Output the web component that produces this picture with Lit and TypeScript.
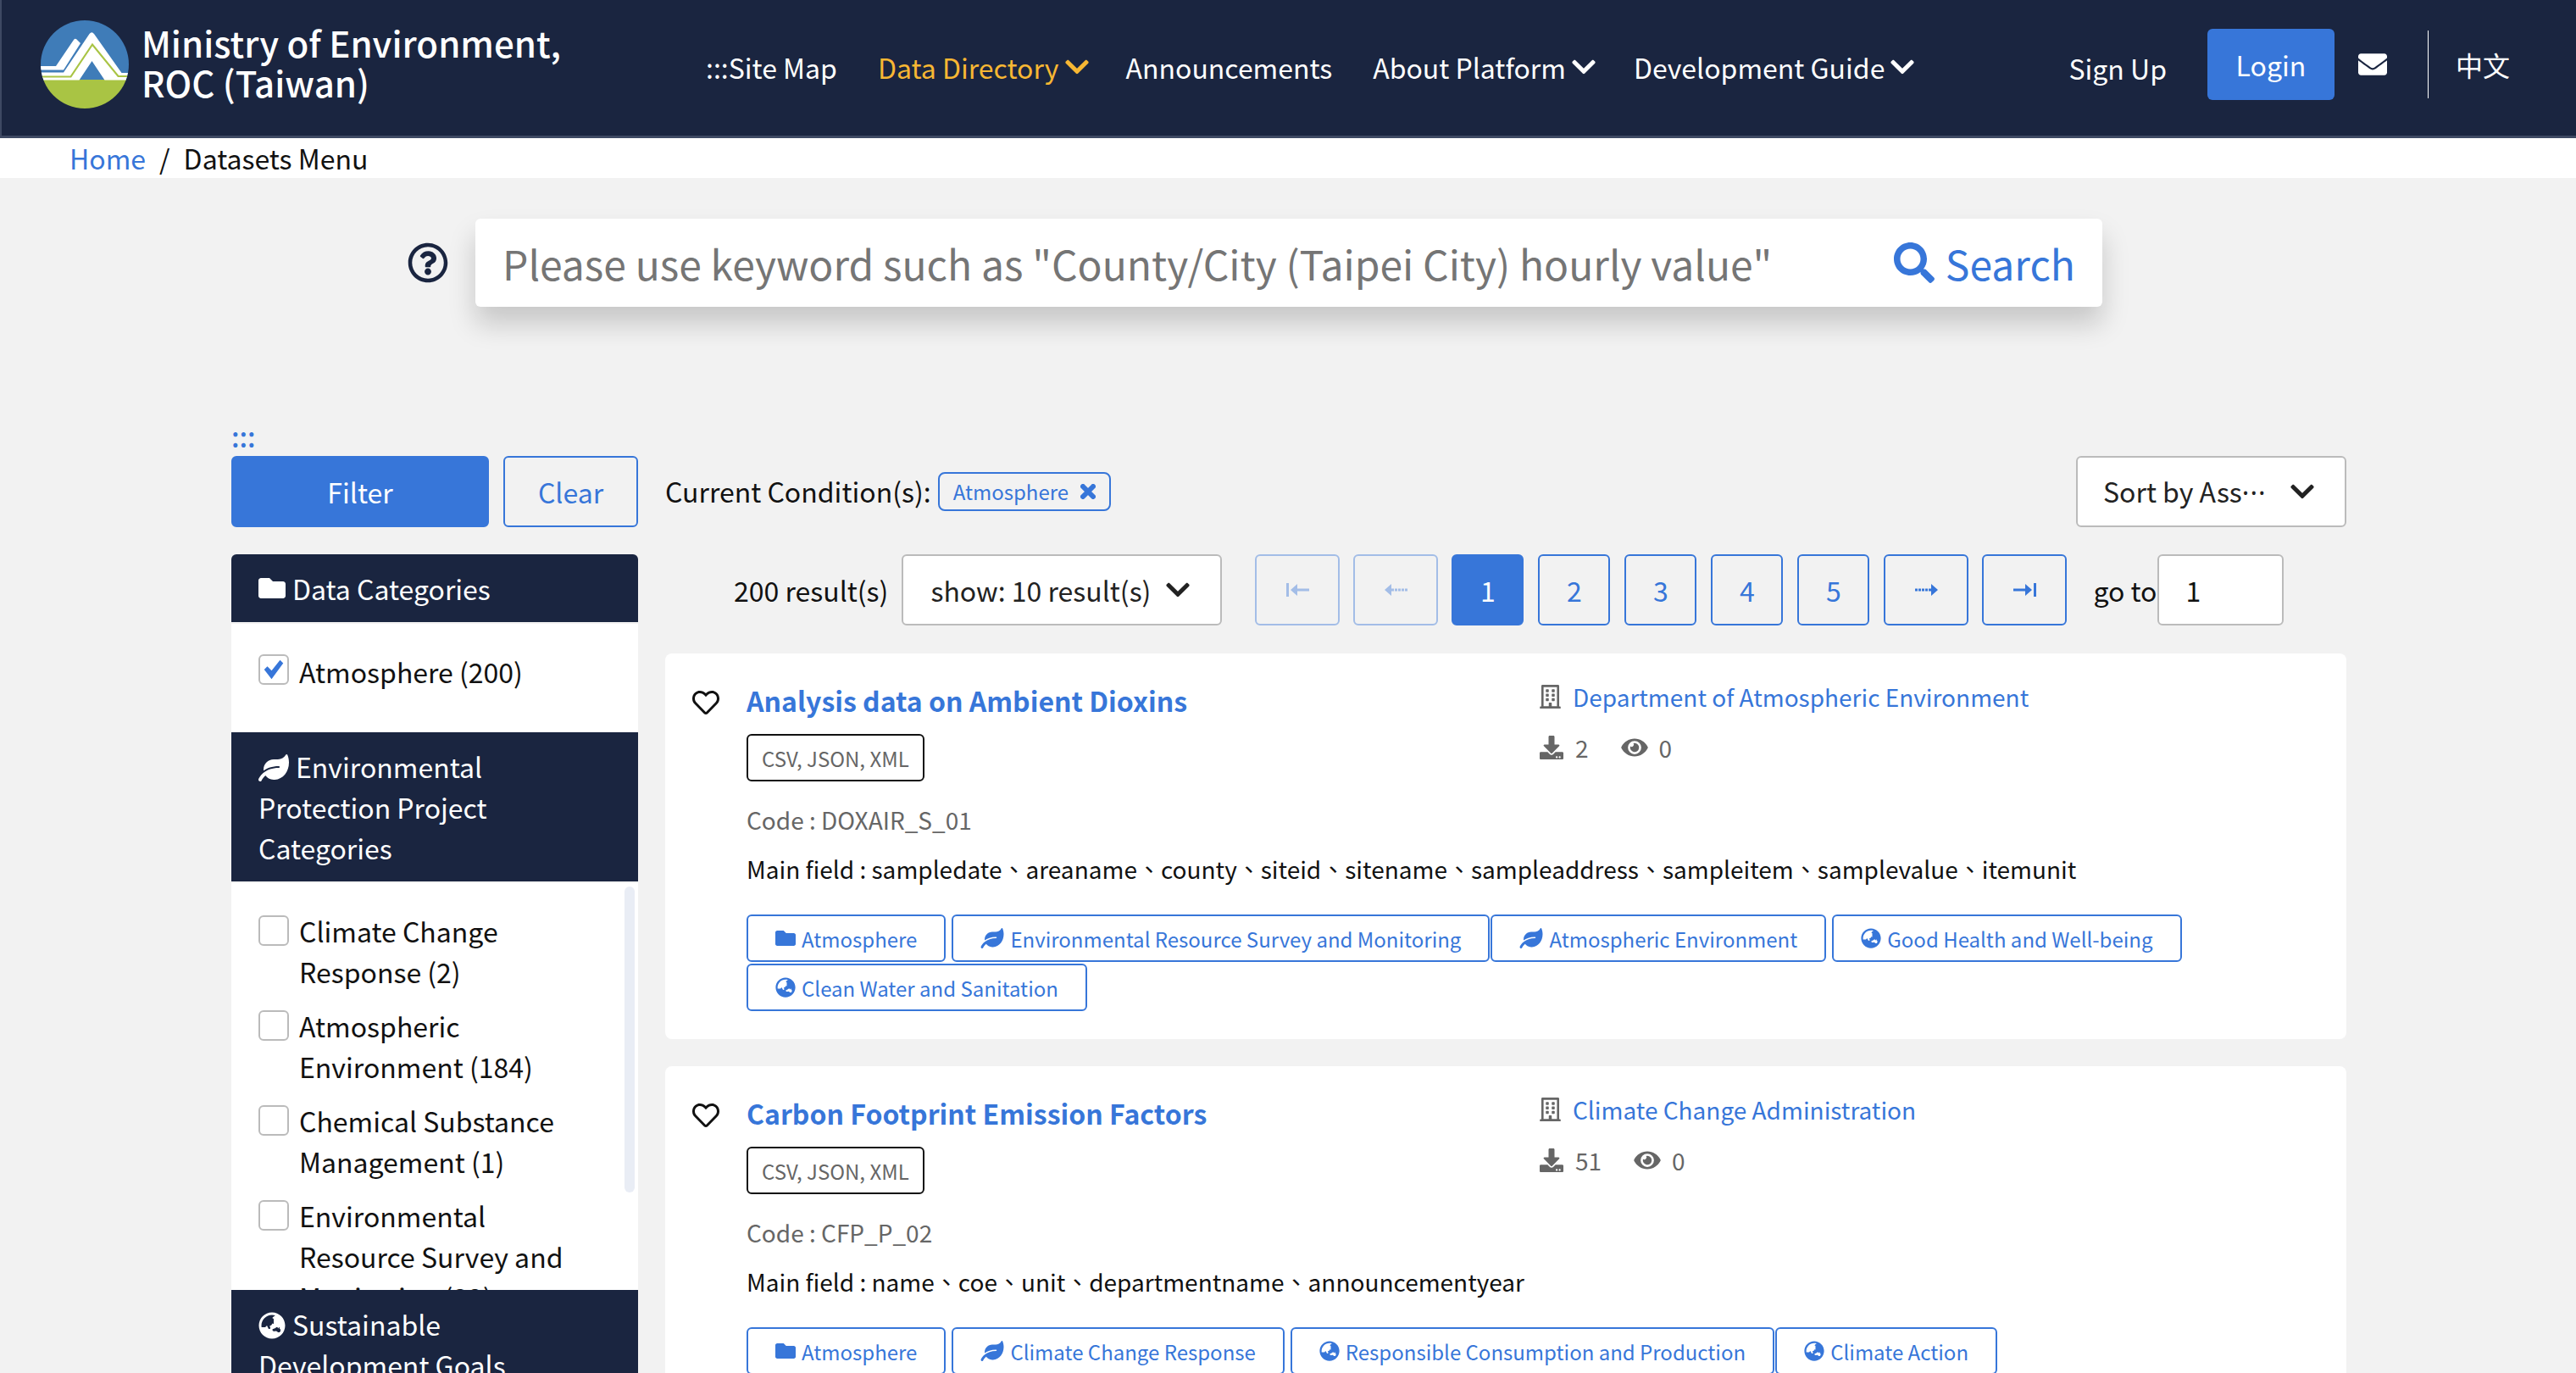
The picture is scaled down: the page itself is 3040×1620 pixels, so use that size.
import { LitElement, html, css, svg } from 'lit';
import { customElement } from 'lit/decorators.js';

const folder = html`<svg class="ic" viewBox="0 0 512 512"><path d="M464 128H272l-64-64H48C21.49 64 0 85.49 0 112v288c0 26.51 21.49 48 48 48h416c26.51 0 48-21.49 48-48V176c0-26.51-21.49-48-48-48z"/></svg>`;
const leaf = html`<svg class="ic leaf" viewBox="0 0 576 512"><path d="M546.2 9.7c-5.6-12.5-21.6-13-28.3-1.2C486.9 62.4 431.4 96 368 96h-80C182 96 96 182 96 288c0 7 .8 13.7 1.5 20.5C161.3 262.8 253.4 224 384 224c8.8 0 16 7.2 16 16s-7.2 16-16 16C132.6 256 26 410.1 2.4 468c-6.6 16.3 1.2 34.9 17.5 41.6 16.4 6.8 35-1.1 41.8-17.3 1.5-3.6 20.9-47.9 71.9-90.6 32.4 43.9 94 85.8 174.9 77.2C465.5 467.5 576 326.7 576 154.3c0-50.2-10.8-102.2-29.8-144.6z"/></svg>`;
const globe = html`<svg class="ic" viewBox="0 0 496 512"><path d="M248 8C111.03 8 0 119.03 0 256s111.03 248 248 248 248-111.03 248-248S384.97 8 248 8zm-11.34 240.23c-2.89 4.82-8.1 7.77-13.72 7.77h-.31c-4.24 0-8.31 1.69-11.31 4.69l-5.66 5.66c-3.12 3.12-3.12 8.19 0 11.31l5.66 5.66c3 3 4.69 7.07 4.69 11.31V304c0 8.84-7.16 16-16 16h-6.11c-6.06 0-11.6-3.42-14.31-8.85l-22.62-45.23c-2.44-4.88-8.95-5.94-12.81-2.08l-19.47 19.46c-3 3-7.07 4.69-11.31 4.69H50.81C49.12 277.55 48 266.92 48 256c0-110.28 89.72-200 200-200 21.51 0 42.2 3.51 61.63 9.82l-50.16 38.53c-5.11 3.41-4.63 11.06.86 13.81l10.83 5.41c5.42 2.71 8.84 8.25 8.84 14.31V216c0 4.42-3.58 8-8 8h-3.06c-3.03 0-5.8-1.71-7.15-4.42-1.56-3.12-5.96-3.29-7.76-.3l-17.37 28.95zM408 358.43c0 4.24-1.69 8.31-4.69 11.31l-9.57 9.57c-3 3-7.07 4.69-11.31 4.69h-15.16c-4.24 0-8.31-1.69-11.31-4.69l-13.01-13.01a26.767 26.767 0 0 0-25.42-7.04l-21.27 5.32c-1.27.32-2.57.48-3.88.48h-10.34c-4.24 0-8.31-1.69-11.31-4.69l-11.91-11.91a8.008 8.008 0 0 1-2.34-5.66v-10.2c0-3.27 1.99-6.21 5.03-7.43l39.34-15.74c1.98-.79 3.86-1.82 5.59-3.05l23.71-16.89a7.978 7.978 0 0 1 4.64-1.48h12.09c3.23 0 6.15 1.94 7.39 4.93l5.35 12.85a4 4 0 0 0 3.69 2.46h3.8c1.78 0 3.35-1.18 3.84-2.88l4.2-14.47c.5-1.71 2.06-2.88 3.84-2.88h6.06c2.21 0 4 1.79 4 4v12.93c0 2.12.84 4.16 2.34 5.66l11.91 11.91c3 3 4.69 7.07 4.69 11.31v24.6z"/></svg>`;
const chevron = html`<svg class="chev" viewBox="0 0 448 512"><path d="M207.029 381.476L12.686 187.132c-9.373-9.373-9.373-24.569 0-33.941l22.667-22.667c9.357-9.357 24.522-9.375 33.901-.04L224 284.505l154.745-154.021c9.379-9.335 24.544-9.317 33.901.04l22.667 22.667c9.373 9.373 9.373 24.569 0 33.941L240.971 381.476c-9.373 9.372-24.569 9.372-33.942 0z"/></svg>`;
const heart = html`<svg class="heart" viewBox="0 0 512 512"><path d="M458.4 64.3C400.6 15.7 311.3 23 256 79.3 200.7 23 111.4 15.6 53.6 64.3-21.6 127.6-10.6 230.8 43 285.5l175.4 178.7c10 10.2 23.4 15.9 37.6 15.9 14.3 0 27.6-5.6 37.6-15.8L469 285.6c53.5-54.7 64.7-157.9-10.6-221.3zm-23.6 187.5L259.4 430.5c-2.4 2.4-4.4 2.4-6.8 0L77.2 251.8c-36.5-37.2-43.9-107.6 7.3-150.7 38.9-32.7 98.9-27.8 136.5 10.5l35 35.7 35-35.7c37.8-38.5 97.8-43.2 136.5-10.6 51.1 43.1 43.5 113.9 7.3 150.8z"/></svg>`;
const building = html`<svg class="bld" viewBox="0 0 448 512"><path d="M128 148v-40c0-6.6 5.4-12 12-12h40c6.6 0 12 5.4 12 12v40c0 6.6-5.4 12-12 12h-40c-6.6 0-12-5.4-12-12zm140 12h40c6.6 0 12-5.4 12-12v-40c0-6.6-5.4-12-12-12h-40c-6.6 0-12 5.4-12 12v40c0 6.6 5.4 12 12 12zm-128 96h40c6.6 0 12-5.4 12-12v-40c0-6.6-5.4-12-12-12h-40c-6.6 0-12 5.4-12 12v40c0 6.6 5.4 12 12 12zm128 0h40c6.6 0 12-5.4 12-12v-40c0-6.6-5.4-12-12-12h-40c-6.6 0-12 5.4-12 12v40c0 6.6 5.4 12 12 12zm-76 84v-40c0-6.6-5.4-12-12-12h-40c-6.6 0-12 5.4-12 12v40c0 6.6 5.4 12 12 12h40c6.6 0 12-5.4 12-12zm76 12h40c6.6 0 12-5.4 12-12v-40c0-6.6-5.4-12-12-12h-40c-6.6 0-12 5.4-12 12v40c0 6.6 5.4 12 12 12zm180 124v36H0v-36c0-6.6 5.4-12 12-12h19.5V24c0-13.3 10.7-24 24-24h337c13.3 0 24 10.7 24 24v440H436c6.6 0 12 5.4 12 12zM79.5 463H192v-67c0-6.6 5.4-12 12-12h40c6.6 0 12 5.4 12 12v67h112.500V49L80 48l-.5 415z"/></svg>`;
const download = html`<svg class="dl" viewBox="0 0 512 512"><path d="M216 0h80c13.3 0 24 10.7 24 24v168h87.7c17.8 0 26.7 21.5 14.1 34.1L269.7 378.3c-7.5 7.5-19.8 7.5-27.3 0L90.1 226.1c-12.6-12.6-3.7-34.1 14.1-34.1H192V24c0-13.3 10.7-24 24-24zm296 376v112c0 13.3-10.7 24-24 24H24c-13.3 0-24-10.7-24-24V376c0-13.3 10.7-24 24-24h146.7l49 49c20.1 20.1 52.5 20.1 72.6 0l49-49H488c13.3 0 24 10.7 24 24zm-124 88c0-11-9-20-20-20s-20 9-20 20 9 20 20 20 20-9 20-20zm64 0c0-11-9-20-20-20s-20 9-20 20 9 20 20 20 20-9 20-20z"/></svg>`;
const eye = html`<svg class="eye" viewBox="0 0 576 512"><path d="M572.52 241.4C518.29 135.59 410.93 64 288 64S57.68 135.64 3.48 241.41a32.35 32.35 0 0 0 0 29.19C57.71 376.41 165.07 448 288 448s230.32-71.64 284.52-177.41a32.35 32.35 0 0 0 0-29.19zM288 400a144 144 0 1 1 144-144 143.93 143.93 0 0 1-144 144zm0-240a95.31 95.31 0 0 0-25.31 3.79 47.85 47.85 0 0 1-66.9 66.9A95.78 95.78 0 1 0 288 160z"/></svg>`;

const logo = html`<svg class="logo" viewBox="0 0 104 104">
  <defs><clipPath id="lc"><ellipse cx="52" cy="52" rx="52" ry="52"/></clipPath></defs>
  <g clip-path="url(#lc)">
    <rect width="104" height="71" fill="#3f7cb8"/>
    <rect y="70" width="104" height="34" fill="#a9c444"/>
    ${svg`<path d="M0 54h18L39 23q1.500-2 3.500-.5L47 27 27 58.500H0z" fill="#fff"/>
    <path d="M0 61.500h27L57.500 16q2.800-3.500 5.500 0L95.500 62H104v8.500H75.500L60.500 48 45.500 70.500H0z" fill="#fff"/>
    <path d="M0 66.500h35.500L61 28.500 91.500 66H104" fill="none" stroke="#a9c444" stroke-width="2.200"/>`}
  </g></svg>`;

interface Card {
  title: string;
  dept: string;
  dl: string;
  code: string;
  fields: string;
  tags: { icon: unknown; text: string; tight?: boolean }[];
}

const CARDS: Card[] = [
  {
    title: 'Analysis data on Ambient Dioxins',
    dept: 'Department of Atmospheric Environment',
    dl: '2',
    code: 'DOXAIR_S_01',
    fields: 'sampledate、areaname、county、siteid、sitename、sampleaddress、sampleitem、samplevalue、itemunit',
    tags: [
      { icon: folder, text: 'Atmosphere' },
      { icon: leaf, text: 'Environmental Resource Survey and Monitoring', tight: true },
      { icon: leaf, text: 'Atmospheric Environment' },
      { icon: globe, text: 'Good Health and Well-being' },
      { icon: globe, text: 'Clean Water and Sanitation' },
    ],
  },
  {
    title: 'Carbon Footprint Emission Factors',
    dept: 'Climate Change Administration',
    dl: '51',
    code: 'CFP_P_02',
    fields: 'name、coe、unit、departmentname、announcementyear',
    tags: [
      { icon: folder, text: 'Atmosphere' },
      { icon: leaf, text: 'Climate Change Response' },
      { icon: globe, text: 'Responsible Consumption and Production', tight: true },
      { icon: globe, text: 'Climate Action' },
    ],
  },
];

const FILTERS = [
  'Climate Change Response (2)',
  'Atmospheric Environment (184)',
  'Chemical Substance Management (1)',
  'Environmental Resource Survey and Monitoring (32)',
];

@customElement('app-root')
export class AppRoot extends LitElement {
  static styles = css`
    :host {
      display: block;
      height: 1620px;
      overflow: hidden;
      background: #f2f2f2;
      font-family: "Noto Sans CJK TC", "Noto Sans", sans-serif;
      font-size: 32px;
      color: #111;
    }
    svg { fill: currentColor; display: block; flex: none; }
    header {
      height: 160px;
      background: #1a2540;
      border-bottom: 3px solid #3e4963;
      border-left: 2px solid #3e4963;
      display: flex;
      align-items: center;
      color: #fff;
      padding-right: 78px;
    }
    .logo { width: 104px; height: 104px; margin: -8px 0 0 46px; }
    .brand { margin: -14px 0 0 15px; font-size: 42px; line-height: 47px; font-weight: 500; width: 666px; }
    nav { display: flex; align-items: center; gap: 46px; margin-top: -2px; }
    nav a { display: flex; align-items: center; gap: 5px; }
    nav .on { color: #f7b733; margin: 0 -4px 0 2px; }
    nav .ann { margin-right: 2px; }
    nav .about { margin-right: -3px; }
    .chev { width: 32px; height: 32px; }
    .right { margin-left: auto; display: flex; align-items: center; }
    .shift { margin-bottom: 8px; }
    .login {
      width: 150px; height: 84px; margin-left: 48px; background: #3776d9; border-radius: 6px;
      display: flex; align-items: center; justify-content: center;
    }
    .mail { width: 34px; height: 34px; margin-left: 28px; }
    .sep { width: 1px; height: 80px; background: #fff; margin-left: 48px; margin-right: 32px; }
    .crumb {
      height: 47px; background: #fff; display: flex; align-items: center; padding-left: 82px;
      gap: 16px; line-height: 47px;
    }
    .blue { color: #3776d9; }
    .search-row { display: flex; align-items: center; margin-top: 48px; padding-left: 481px; }
    .help { width: 48px; height: 48px; color: #1a2540; margin-right: 32px; }
    .search {
      width: 1920px; height: 104px; background: #fff; border-radius: 6px; box-sizing: border-box;
      display: flex; align-items: center; justify-content: space-between; padding: 0 32px;
      box-shadow: 0 20px 32px rgba(0, 0, 0, 0.18); font-size: 48px; color: #757575;
    }
    .search .go { display: flex; align-items: center; gap: 13px; color: #3776d9; }
    .search .go svg { width: 48px; height: 48px; }
    .dots { margin: 140px 0 0 273px; height: 36px; color: #3776d9; line-height: 24px; font-weight: 500; }
    .main { display: grid; grid-template-columns: 480px 1984px; gap: 32px; padding-left: 273px; }
    .btns { display: flex; gap: 17px; height: 84px; margin-bottom: 32px; }
    .btn {
      box-sizing: border-box; height: 84px; border-radius: 6px; display: flex; align-items: center;
      justify-content: center; border: 2px solid #3776d9; color: #3776d9; flex: none;
    }
    .btn.fill { background: #3776d9; color: #fff; }
    .btns .fill { width: 304px; }
    .btns .btn:not(.fill) { width: 159px; }
    .head { background: #1a2540; color: #fff; padding: 0 32px; line-height: 48px; }
    .head svg { display: inline-block; width: 32px; height: 32px; vertical-align: -4px; margin-right: 8px; }
    .head svg.leaf { width: 36px; }
    .head.first { height: 80px; border-radius: 6px 6px 0 0; display: flex; align-items: center; }
    .head.env { padding-top: 16px; padding-bottom: 16px; }
    .head.sdg { padding-top: 16px; }
    .box { background: #fff; margin-top: 2px; }
    .item { display: flex; gap: 12px; line-height: 48px; margin-bottom: 16px; padding-left: 32px; }
    .cb {
      box-sizing: border-box; width: 36px; height: 36px; margin-top: 4px; border: 2px solid #bbb;
      border-radius: 6px; background: #fff; flex: none; color: #3776d9;
    }
    .cb svg { width: 30px; height: 30px; margin: 1px; }
    .box.one { height: 128px; padding-top: 32px; box-sizing: border-box; }
    .box.list { height: 480px; overflow: hidden; position: relative; padding-top: 32px; box-sizing: border-box; }
    .box.list .item { padding-right: 40px; }
    .box.list .cb { margin-top: 6px; }
    .thumb { position: absolute; left: 464px; top: 4px; width: 12px; height: 361px; border-radius: 6px; background: #e9edf5; }
    .cond { display: flex; align-items: center; height: 84px; margin-bottom: 32px; line-height: 48px; }
    .lbl { margin-bottom: 3px; }
    .chip {
      display: flex; align-items: center; gap: 14px; height: 46px; box-sizing: border-box; margin-left: 8px;
      border: 2px solid #3776d9; border-radius: 8px; color: #3776d9; padding: 0 16px; font-size: 24px;
    }
    .chip svg { width: 18px; height: 18px; stroke: currentColor; stroke-width: 6; stroke-linecap: round; }
    .sort {
      box-sizing: border-box; margin-left: auto; width: 319px; height: 84px; background: #fff;
      border: 2px solid #bbb; border-radius: 6px; display: flex; align-items: center; justify-content: space-between;
      padding: 0 34px 0 30px; color: #222; white-space: nowrap;
    }
    .ell { font-family: "Noto Sans", sans-serif; letter-spacing: 1px; }
    .pager { display: flex; align-items: center; height: 84px; margin-bottom: 33px; padding-left: 81px; }
    .select {
      box-sizing: border-box; width: 378px; height: 84px; background: #fff; border: 2px solid #bbb; border-radius: 6px;
      display: flex; align-items: center; justify-content: space-between; padding: 0 34px 0 32px; margin: 0 39px 0 16px; color: #222;
    }
    .pg { width: 85px; margin-right: 17px; }
    .pg.arrow { width: 100px; margin-right: 16px; }
    .pg.off { opacity: 0.42; }
    .pg svg { width: 27px; height: 16px; }
    .goto { margin-left: 15px; }
    .input {
      box-sizing: border-box; width: 149px; height: 84px; background: #fff; border: 2px solid #bbb; border-radius: 6px;
      display: flex; align-items: center; padding-left: 32px;
    }
    .card {
      background: #fff; border-radius: 8px; height: 455px; margin-bottom: 32px; display: flex;
      padding: 31px 0 0 32px; box-sizing: border-box;
    }
    .heart { width: 32px; height: 32px; margin-top: 11px; color: #111; }
    .body { margin-left: 32px; width: 1780px; position: relative; }
    .title { color: #3776d9; font-weight: 700; line-height: 48px; }
    .fmt {
      box-sizing: border-box; display: flex; align-items: center; width: fit-content; height: 56px; margin-top: 16px; padding: 0 16px;
      border: 2px solid #111; border-radius: 6px; color: #666; font-size: 24px;
    }
    .code { color: #666; font-size: 28px; margin-top: 21px; line-height: 48px; }
    .fields { font-size: 28px; margin-top: 10px; line-height: 48px; }
    .tags { display: flex; flex-wrap: wrap; width: 1780px; margin-top: 30px; row-gap: 2px; }
    .tag {
      box-sizing: border-box; height: 56px; display: flex; align-items: center; gap: 7px; border: 2px solid #3776d9;
      border-radius: 6px; color: #3776d9; font-size: 24px; padding: 0 32px; margin-right: 7px;
    }
    .tag.tight { margin-right: 1px; }
    .tag .ic { width: 24px; height: 24px; }
    .tag .ic.leaf { width: 28px; }
    .meta { position: absolute; left: 936px; top: -7px; }
    .dept { display: flex; align-items: center; gap: 14px; color: #3776d9; font-size: 28px; line-height: 54px; }
    .bld { width: 25px; height: 28px; color: #666; }
    .stats { display: flex; align-items: center; color: #666; font-size: 28px; margin-top: 9px; line-height: 48px; }
    .dl { width: 28px; height: 28px; margin-right: 14px; }
    .eye { width: 32px; height: 28px; margin: 0 13px 0 38px; }
  `;

  private card(c: Card) {
    return html`<div class="card">
      ${heart}
      <div class="body">
        <div class="title">${c.title}</div>
        <div class="fmt">CSV, JSON, XML</div>
        <div class="code">Code : ${c.code}</div>
        <div class="fields">Main field : ${c.fields}</div>
        <div class="tags">
          ${c.tags.map((t) => html`<span class="tag ${t.tight ? 'tight' : ''}">${t.icon}${t.text}</span>`)}
        </div>
        <div class="meta">
          <div class="dept">${building}${c.dept}</div>
          <div class="stats">${download}${c.dl}${eye}0</div>
        </div>
      </div>
    </div>`;
  }

  render() {
    return html`
      <header>
        ${logo}
        <div class="brand">Ministry of Environment,<br />ROC (Taiwan)</div>
        <nav>
          <a>:::Site Map</a>
          <a class="on">Data Directory${chevron}</a>
          <a class="ann">Announcements</a>
          <a class="about">About Platform${chevron}</a>
          <a>Development Guide${chevron}</a>
        </nav>
        <div class="right">
          <a>Sign Up</a>
          <a class="login shift">Login</a>
          <svg class="mail shift" viewBox="0 0 512 512"><path d="M502.3 190.8c3.9-3.1 9.7-.2 9.7 4.7V400c0 26.5-21.5 48-48 48H48c-26.5 0-48-21.5-48-48V195.6c0-5 5.7-7.8 9.7-4.7 22.4 17.4 52.1 39.5 154.1 113.6 21.1 15.4 56.7 47.8 92.2 47.6 35.7.3 72-32.8 92.3-47.6 102-74.1 131.6-96.3 154-113.7zM256 320c23.2.4 56.6-29.2 73.4-41.4 132.7-96.3 142.8-104.7 173.4-128.7 5.8-4.5 9.2-11.5 9.2-18.9v-19c0-26.5-21.5-48-48-48H48C21.5 64 0 85.5 0 112v19c0 7.4 3.4 14.3 9.2 18.9 30.6 23.9 40.7 32.4 173.4 128.7 16.8 12.2 50.2 41.8 73.4 41.4z"/></svg>
          <div class="sep shift"></div>
          <a class="shift">中文</a>
        </div>
      </header>
      <div class="crumb"><span class="blue">Home</span><span>/</span><span>Datasets Menu</span></div>
      <div class="search-row">
        <svg class="help" viewBox="0 0 512 512"><path d="M256 8C119 8 8 119 8 256s111 248 248 248 248-111 248-248S393 8 256 8zm0 448c-110.500 0-200-89.500-200-200S145.500 56 256 56s200 89.500 200 200-89.500 200-200 200zm107-255c0 67-72 68-72 93v6c0 7-5 12-12 12h-46c-7 0-12-5-12-12v-9c0-36 27-50 48-62 18-10 29-17 29-30 0-18-23-29-41-29-24 0-35 11-50 31-4 5-11 6-16 2l-28-21c-5-4-6-11-3-16 24-36 55-56 103-56 50 0 100 39 100 91zm-65 167c0 23-19 42-42 42s-42-19-42-42 19-42 42-42 42 19 42 42z"/></svg>
        <div class="search">
          <span>Please use keyword such as "County/City (Taipei City) hourly value"</span>
          <span class="go"><svg viewBox="0 0 512 512"><path d="M505 442.7L405.3 343c-4.500-4.500-10.600-7-17-7H372c27.600-35.300 44-79.700 44-128C416 93.100 322.900 0 208 0S0 93.100 0 208s93.100 208 208 208c48.300 0 92.700-16.400 128-44v16.300c0 6.400 2.500 12.500 7 17l99.700 99.700c9.400 9.400 24.600 9.400 33.900 0l28.300-28.300c9.400-9.400 9.400-24.600.1-34zM208 336c-70.700 0-128-57.200-128-128 0-70.700 57.200-128 128-128 70.700 0 128 57.200 128 128 0 70.700-57.200 128-128 128z"/></svg>Search</span>
        </div>
      </div>
      <div class="dots">:::</div>
      <div class="main">
        <aside>
          <div class="btns"><div class="btn fill">Filter</div><div class="btn">Clear</div></div>
          <div class="head first">${folder}Data Categories</div>
          <div class="box one">
            <div class="item"><span class="cb"><svg viewBox="0 0 24 24"><path d="M3 12l3-3 4 4 8-10 3 3-11 15z"/></svg></span>Atmosphere (200)</div>
          </div>
          <div class="head env">${leaf}Environmental Protection Project Categories</div>
          <div class="box list">
            ${FILTERS.map((f) => html`<div class="item"><span class="cb"></span><span>${f}</span></div>`)}
            <div class="thumb"></div>
          </div>
          <div class="head sdg">${globe}Sustainable Development Goals</div>
        </aside>
        <section>
          <div class="cond">
            <span class="lbl">Current Condition(s):</span>
            <span class="chip">Atmosphere<svg viewBox="0 0 18 18"><path d="M3 3l12 12M15 3L3 15"/></svg></span>
            <div class="sort"><span>Sort by Ass<span class="ell">···</span></span>${chevron}</div>
          </div>
          <div class="pager">
            200 result(s)
            <div class="select">show: 10 result(s)${chevron}</div>
            <div class="btn pg arrow off"><svg viewBox="0 0 27 16"><path d="M0 0h3v16H0zM5 8l8-7v5.500h14v3H13V15z"/></svg></div>
            <div class="btn pg arrow off"><svg viewBox="0 0 27 16"><path d="M0 8l8-7v5.500h3v3H8V15zM12 6.500h3v3h-3zM16 6.500h3v3h-3zM20 6.500h3v3h-3zM24 6.500h3v3h-3z"/></svg></div>
            <div class="btn pg fill">1</div>
            <div class="btn pg">2</div>
            <div class="btn pg">3</div>
            <div class="btn pg">4</div>
            <div class="btn pg">5</div>
            <div class="btn pg arrow"><svg viewBox="0 0 27 16"><path d="M27 8l-8-7v5.500h-3v3h3V15zM15 6.500h-3v3h3zM11 6.500H8v3h3zM7 6.500H4v3h3zM3 6.500H0v3h3z"/></svg></div>
            <div class="btn pg arrow"><svg viewBox="0 0 27 16"><path d="M27 0h-3v16h3zM22 8l-8-7v5.500H0v3h14V15z"/></svg></div>
            <span class="goto">go to</span>
            <div class="input">1</div>
          </div>
          ${CARDS.map((c) => this.card(c))}
        </section>
      </div>
    `;
  }
}
